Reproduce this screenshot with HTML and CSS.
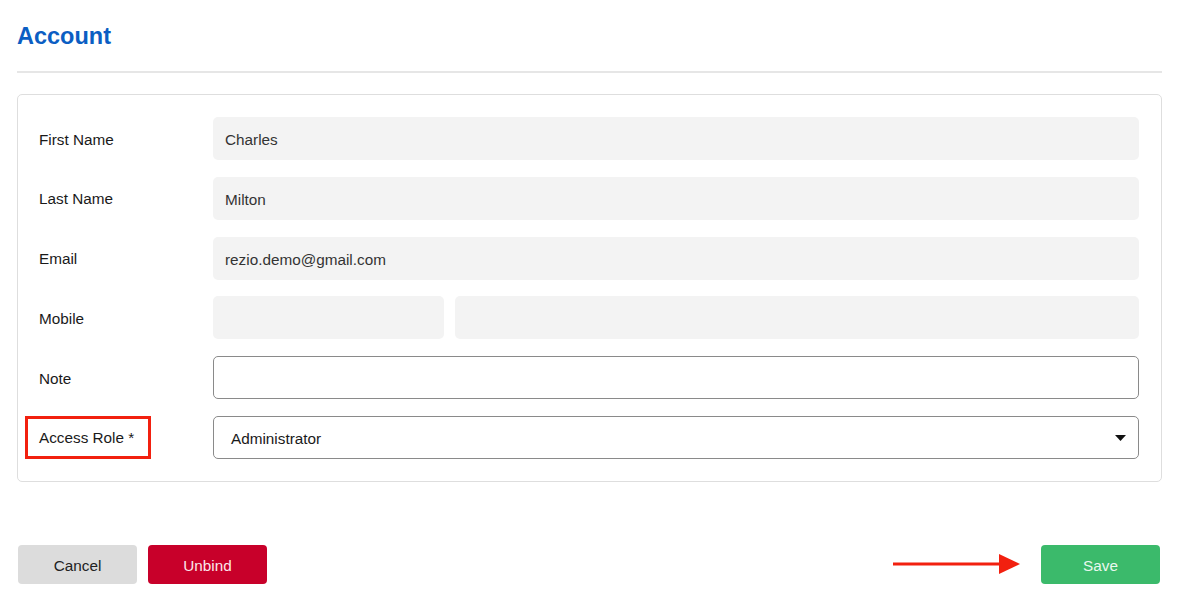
FILE: index.html
```html
<!DOCTYPE html>
<html>
<head>
<meta charset="utf-8">
<link rel="stylesheet" href="styles.css">
</head>
<body>
<div class="page">
  <h1 class="title">Account</h1>
  <div class="divider"></div>
  <div class="card">
    <div class="row">
      <div class="label">First Name</div>
      <div class="field filled">Charles</div>
    </div>
    <div class="row">
      <div class="label">Last Name</div>
      <div class="field filled">Milton</div>
    </div>
    <div class="row">
      <div class="label">Email</div>
      <div class="field filled">rezio.demo@gmail.com</div>
    </div>
    <div class="row">
      <div class="label">Mobile</div>
      <div class="mobile">
        <div class="field filled code"></div>
        <div class="field filled number"></div>
      </div>
    </div>
    <div class="row">
      <div class="label">Note</div>
      <div class="field outline"></div>
    </div>
    <div class="row">
      <div class="label"><span class="highlight">Access Role *</span></div>
      <div class="field outline select">
        <span>Administrator</span>
        <svg class="caret" width="11" height="6" viewBox="0 0 11 6"><path d="M0 0 L11 0 L5.5 6 Z" fill="#111"/></svg>
      </div>
    </div>
  </div>
  <div class="actions">
    <div class="left">
      <button class="btn cancel">Cancel</button>
      <button class="btn unbind">Unbind</button>
    </div>
    <div class="right">
      <svg class="arrow" width="128" height="22" viewBox="0 0 128 22"><rect x="0" y="9.5" width="110" height="3" fill="#f2200f"/><path d="M106 1 L127 11 L106 21 Z" fill="#f2200f"/></svg>
      <button class="btn save">Save</button>
    </div>
  </div>
</div>
</body>
</html>
```
FILE: styles.css
```css
* { box-sizing: border-box; }
html, body { margin: 0; padding: 0; background: #fff; }
body { font-family: "Liberation Sans", Arial, sans-serif; color: #1a1a1a; }
.page { padding: 22px 22px 0 17px; width: 1184px; }
.title { margin: 0; font-size: 23.5px; font-weight: 700; color: #0b5ec3; line-height: 28px; height: 28px; }
.divider { margin-top: 21px; height: 2px; background: #e6e6e6; width: 1145px; }
.card { margin-top: 21px; width: 1145px; border: 1px solid #dedede; border-radius: 5px; padding: 22px 22px 22px 21px; display: flex; flex-direction: column; gap: 16.8px; }
.row { display: flex; align-items: center; height: 43px; }
.label { width: 174px; flex: none; font-size: 15.3px; color: #1a1a1a; padding-top: 2px; }
.highlight { position: relative; }
.highlight::after { content: ""; position: absolute; left: -14px; top: -13px; width: 126px; height: 43px; border: 3px solid #f2200f; box-sizing: border-box; }
.field { flex: 1; height: 43px; border-radius: 5px; font-size: 15.3px; display: flex; align-items: center; padding: 3px 12px 0 12px; color: #333; }
.filled { background: #f3f3f3; }
.outline { background: #fff; border: 1px solid #8a8a8a; }
.mobile { flex: 1; display: flex; gap: 11px; height: 43px; }
.code { flex: none; width: 231px; }
.number { flex: 1; }
.select { padding: 3px 12px 0 17px; justify-content: space-between; color: #1a1a1a; }
.caret { margin-top: -2px; }
.actions { margin-top: 63px; display: flex; justify-content: space-between; align-items: center; width: 1143px; padding-left: 1px; }
.left, .right { display: flex; align-items: center; gap: 11px; }
.right { gap: 20px; }
.btn { width: 119px; height: 39px; border: none; border-radius: 4px; font-family: "Liberation Sans", Arial, sans-serif; font-size: 15.3px; padding: 3px 0 0 0; }
.cancel { background: #dcdcdc; color: #222; }
.unbind { background: #c8002a; color: #fbe6ea; }
.save { background: #3bba6b; color: #e9f8ee; }
.arrow { display: block; }
```
